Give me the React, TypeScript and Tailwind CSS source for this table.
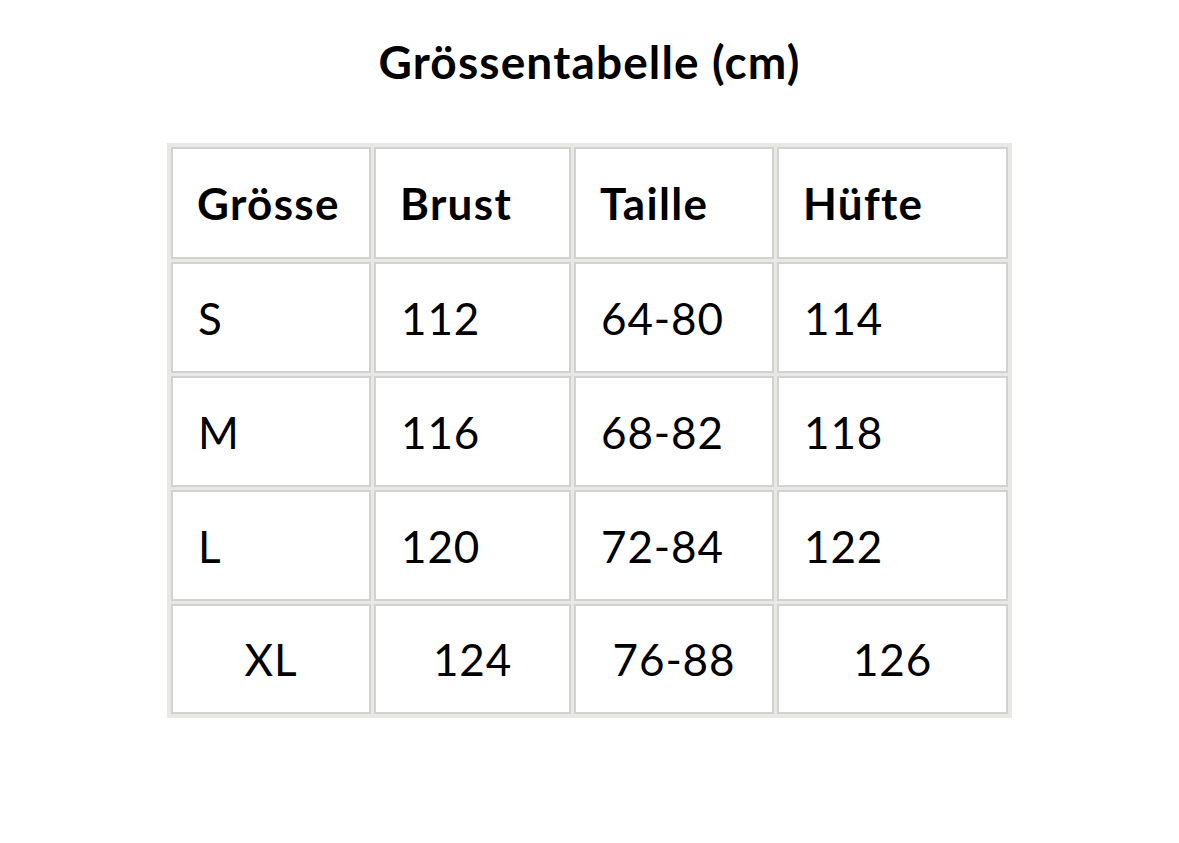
const headers = ['Grösse', 'Brust', 'Taille', 'Hüfte']

const rows = [
  ['S', '112', '64-80', '114'],
  ['M', '116', '68-82', '118'],
  ['L', '120', '72-84', '122'],
]

const lastRow = ['XL', '124', '76-88', '126']

export default function App() {
  return (
    <div className="flex min-h-[843px] w-full flex-col items-center bg-white text-black"
      style={{ fontFamily: 'Lato, "Noto Sans", sans-serif' }}>
      <h1 className="mt-[34px] text-[46px] font-bold leading-[56px] tracking-[0.025em]">Grössentabelle (cm)</h1>

      <div className="mt-[53px] grid grid-cols-[200px_197px_200px_231px] grid-rows-[112px_111px_111px_111px_110px] gap-[3px] bg-[#e8e8e4] p-[4px]">
        {headers.map((h) => (
          <div key={h} className="flex items-center border-2 border-[#d2d2d0] bg-white pl-[24px] text-[44px] font-bold tracking-[0.03em]">
            {h}
          </div>
        ))}

        {rows.map((row) =>
          row.map((cell, i) => (
            <div key={row[0] + i} className="flex items-center border-2 border-[#d2d2d0] bg-white pl-[25px] text-[44px] tracking-[0.02em]">
              {cell}
            </div>
          ))
        )}

        {lastRow.map((cell) => (
          <div key={cell} className="flex items-center justify-center border-2 border-[#d2d2d0] bg-white text-[44px] tracking-[0.02em]">
            {cell}
          </div>
        ))}
      </div>
    </div>
  )
}
